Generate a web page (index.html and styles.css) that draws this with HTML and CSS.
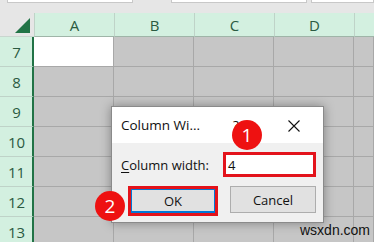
FILE: index.html
```html
<!DOCTYPE html>
<html>
<head>
<meta charset="utf-8">
<link rel="stylesheet" href="styles.css">
</head>
<body>
<div class="app">
  <div class="topstrip">
    <div class="fbox fbox1"></div>
    <div class="fbox fbox2"></div>
    <div class="fbox fbox3"></div>
  </div>
  <div class="sheet">
    <div class="corner"><svg width="34" height="24" viewBox="0 0 34 24"><polygon points="15,20 30,20 30,5" fill="#217346"/></svg></div>
    <div class="colh">A</div>
    <div class="colh">B</div>
    <div class="colh">C</div>
    <div class="colh">D</div>
    <div class="colh last"></div>

    <div class="rowh">7</div><div class="cell white"></div><div class="cell"></div><div class="cell"></div><div class="cell"></div><div class="cell last"></div>
    <div class="rowh">8</div><div class="cell"></div><div class="cell"></div><div class="cell"></div><div class="cell"></div><div class="cell last"></div>
    <div class="rowh">9</div><div class="cell"></div><div class="cell"></div><div class="cell"></div><div class="cell"></div><div class="cell last"></div>
    <div class="rowh">10</div><div class="cell"></div><div class="cell"></div><div class="cell"></div><div class="cell"></div><div class="cell last"></div>
    <div class="rowh">11</div><div class="cell"></div><div class="cell"></div><div class="cell"></div><div class="cell"></div><div class="cell last"></div>
    <div class="rowh">12</div><div class="cell"></div><div class="cell"></div><div class="cell"></div><div class="cell"></div><div class="cell last"></div>
    <div class="rowh">13</div><div class="cell"></div><div class="cell"></div><div class="cell"></div><div class="cell"></div><div class="cell last"></div>
  </div>

  <div class="dialog">
    <div class="titlebar">
      <span class="title">Column Wi...</span>
      <span class="help">?</span>
      <svg class="close" width="12" height="12" viewBox="0 0 12 12"><path d="M0.5 0.5 L11.5 11.5 M11.5 0.5 L0.5 11.5" stroke="#111" stroke-width="1.1" fill="none"/></svg>
    </div>
    <div class="body">
      <div class="fieldrow">
        <span class="label"><u>C</u>olumn width:</span>
        <div class="input hl">4</div>
      </div>
      <div class="btnrow">
        <div class="okwrap hl"><div class="btn ok">OK</div></div>
        <div class="btn cancel">Cancel</div>
      </div>
    </div>
  </div>

  <div class="badge b1">1</div>
  <div class="badge b2">2</div>
  <div class="watermark">wsxdn.com</div>
</div>
</body>
</html>
```

FILE: styles.css
```css
* { box-sizing: border-box; }
html, body { margin: 0; padding: 0; }
body { width: 374px; height: 242px; overflow: hidden; font-family: "Open Sans", "Noto Sans", sans-serif; background: #c6c6c6; }
.app { position: relative; width: 374px; height: 242px; overflow: hidden; }

.topstrip { height: 13px; background: #e6e6e6; position: relative; display: flex; }
.fbox { height: 3px; background: #fff; border: 1px solid #c8c8c8; border-top: none; }
.fbox1 { margin-left: 7px; width: 126px; }
.fbox2 { margin-left: 38px; width: 136px; }
.fbox3 { margin-left: 4px; flex: 1; }

.sheet {
  display: grid;
  grid-template-columns: 34px 80px 80px 80px 80px 1fr;
  grid-template-rows: 24px repeat(7, 30px);
}
.corner { background: #e6e6e6; border-bottom: 1px solid #c9d6cf; }
.corner svg { display: block; }
.colh {
  background: #d3f0e0;
  color: #2b5a41;
  font-size: 15px;
  display: flex; align-items: center; justify-content: center;
  border-left: 1px solid #bfd3c8;
  border-bottom: 1px solid #9fb5a8;
}
.rowh {
  background: #d3f0e0;
  color: #2b5a41;
  font-size: 15px;
  display: flex; align-items: center; justify-content: center;
  border-right: 2px solid #217346;
  border-bottom: 1px solid #bfd3c8;
  padding-left: 1px;
}
.cell { background: #c6c6c6; border-right: 1px solid #a8a8a8; border-bottom: 1px solid #a8a8a8; }
.cell.white { background: #fff; border-color: #fff #a8a8a8 #a8a8a8 #fff; }

.dialog {
  position: absolute; left: 111px; top: 106px; width: 213px; height: 117px;
  background: #f0f0f0; border: 1px solid #8a8a8a;
  box-shadow: 0 0 10px rgba(0,0,0,0.35);
  display: flex; flex-direction: column;
}
.titlebar { height: 36px; background: #fff; display: flex; align-items: center; padding-left: 9px; position: relative; }
.title { font-size: 13.5px; color: #111; }
.help { position: absolute; left: 121px; top: 9px; font-size: 13.5px; color: #111; }
.close { position: absolute; left: 176px; top: 13px; }
.body { flex: 1; padding: 9px 0 0 9px; display: flex; flex-direction: column; }
.fieldrow { display: flex; align-items: center; height: 25px; }
.label { font-size: 13px; color: #111; width: 102px; }
.label u { text-decoration-thickness: 1px; text-underline-offset: 2px; }
.hl { border: 3px solid #e3131b; }
.input { width: 93px; height: 25px; background: #fff; font-size: 13px; color: #111; padding-left: 2px; display: flex; align-items: center; }
.btnrow { display: flex; margin-top: 9px; margin-left: 7px; }
.okwrap { width: 90px; height: 30px; padding: 0; }
.btn { background: #e1e1e1; font-size: 13px; color: #111; display: flex; align-items: center; justify-content: center; }
.ok { width: 100%; height: 100%; border: 1px solid #0078d7; border-bottom-width: 2px; }
.cancel { width: 86px; height: 27px; border: 1px solid #adadad; margin-left: 12px; }

.badge {
  position: absolute; width: 30px; height: 30px; border-radius: 50%;
  background: #ee1111; color: #fff; font-size: 19px;
  display: flex; align-items: center; justify-content: center;
  font-family: "Open Sans", sans-serif;
}
.b1 { left: 232px; top: 120px; }
.b2 { left: 95px; top: 191px; }
.watermark { position: absolute; left: 300px; top: 222px; font-size: 14px; color: #111; font-family: "Liberation Sans", Arial, sans-serif; }
```
